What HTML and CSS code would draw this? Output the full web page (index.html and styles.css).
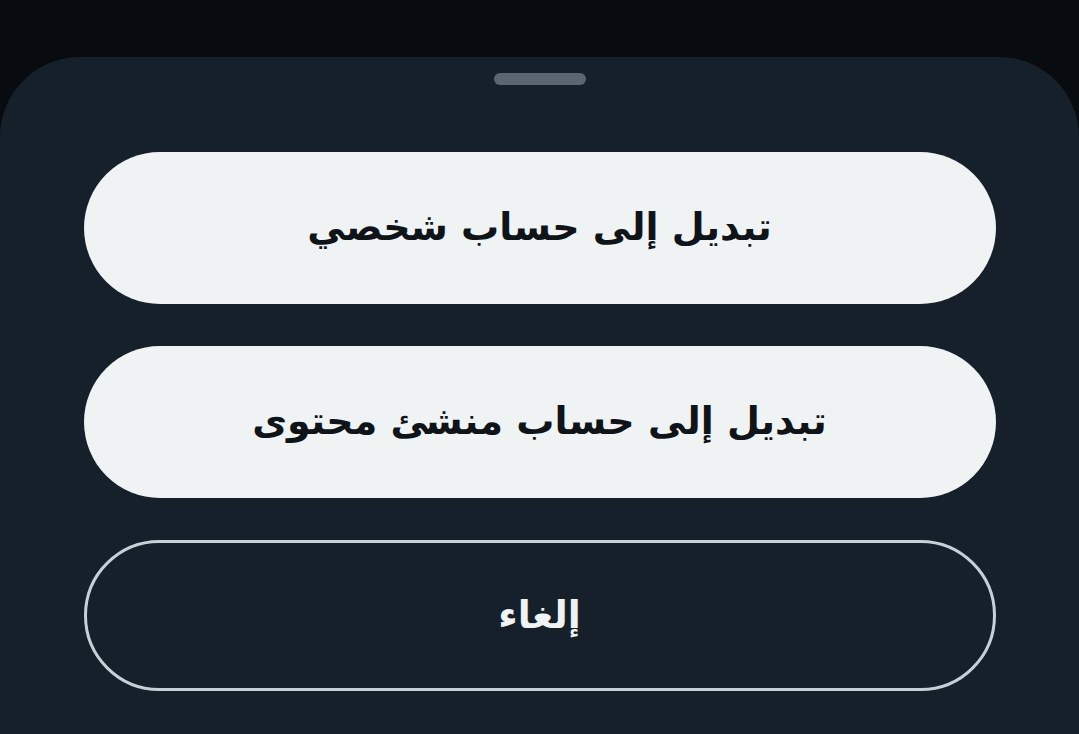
FILE: index.html
```html
<!DOCTYPE html>
<html lang="ar" dir="rtl">
<head>
    <meta charset="UTF-8">
    <meta name="viewport" content="width=device-width, initial-scale=1.0">
    <title>تبديل الحساب</title>
    <link rel="stylesheet" href="styles.css">
</head>
<body>
    <div class="sheet">
        <div class="handle"></div>
        <div class="actions">
            <button class="btn btn-light">تبديل إلى حساب شخصي</button>
            <button class="btn btn-light">تبديل إلى حساب منشئ محتوى</button>
            <button class="btn btn-outline">إلغاء</button>
        </div>
    </div>
</body>
</html>
```

FILE: styles.css
```css
html, body {
    margin: 0;
    height: 100%;
}

body {
    background-color: #080c10;
    font-family: "DejaVu Sans", "Noto Sans", sans-serif;
    overflow: hidden;
}

.sheet {
    margin-top: 57px;
    height: calc(100% - 57px);
    background-color: #16202a;
    border-radius: 80px 80px 0 0;
    display: flex;
    flex-direction: column;
    align-items: center;
    padding-top: 16px;
    box-sizing: border-box;
}

.handle {
    width: 92px;
    height: 12px;
    border-radius: 6px;
    background-color: #5b6670;
}

.actions {
    margin-top: 67px;
    width: 912px;
    display: flex;
    flex-direction: column;
    gap: 42px;
}

.btn {
    height: 152px;
    border-radius: 76px;
    font-family: inherit;
    font-size: 38px;
    font-weight: bold;
    border: none;
    padding: 0 0 2px;
    cursor: pointer;
}

.btn-light {
    background-color: #eff3f4;
    color: #0f1419;
}

.btn-outline {
    background-color: transparent;
    color: #eff3f4;
    border: 3px solid #c5d0d8;
    height: 151px;
}
```
